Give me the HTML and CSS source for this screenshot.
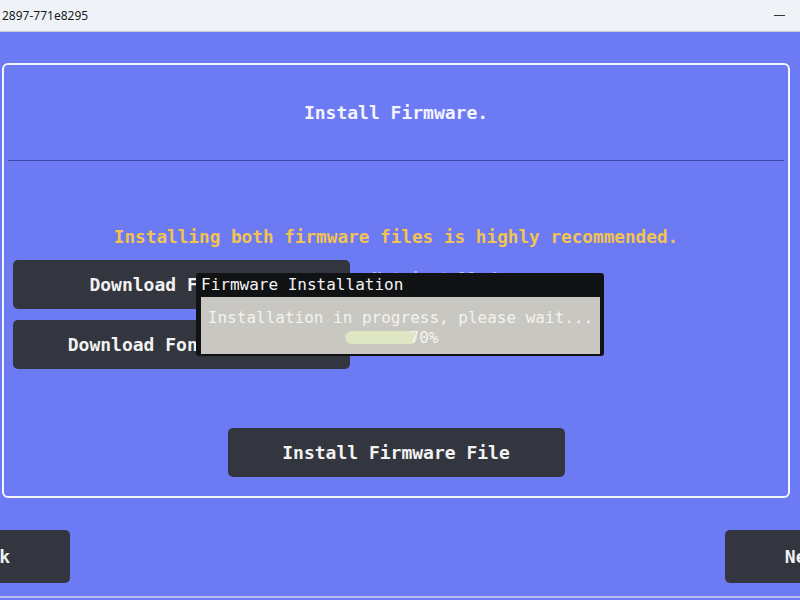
FILE: index.html
```html
<!DOCTYPE html>
<html>
<head>
<meta charset="utf-8">
<link rel="stylesheet" href="styles.css">
</head>
<body>
<div class="titlebar">
  <span class="wintitle">2897-771e8295</span>
  <span class="minimize"></span>
</div>
<div class="main">
  <div class="panel">
    <div class="heading">Install Firmware.</div>
    <div class="divider"></div>
    <div class="notice">Installing both firmware files is highly recommended.</div>
    <div class="dl-row">
      <button class="btn dl">Download Firmware</button>
      <span class="status">Not installed</span>
    </div>
    <div class="dl-row second">
      <button class="btn dl">Download Font Library</button>
      <span class="status">Not installed</span>
    </div>
    <div class="install-row">
      <button class="btn install">Install Firmware File</button>
    </div>
  </div>
  <div class="nav-row">
    <button class="btn nav back">Back</button>
    <button class="btn nav next">Next</button>
  </div>
  <div class="dialog">
    <div class="dialog-title">Firmware Installation</div>
    <div class="dialog-body">
      <div class="dialog-msg">Installation in progress, please wait...</div>
      <div class="progress">
        <div class="track"><div class="fill" style="width:70%"></div></div>
        <span class="pct">70%</span>
      </div>
    </div>
  </div>
</div>
</body>
</html>
```
FILE: styles.css
```css
html, body {
  margin: 0;
  padding: 0;
  width: 800px;
  height: 600px;
  overflow: hidden;
  background: #6c7af3;
}
.titlebar {
  height: 31px;
  background: #eff3f8;
  border-bottom: 1px solid #c9ceda;
  display: flex;
  align-items: center;
  justify-content: space-between;
  padding: 0 15px 0 2px;
  font-family: "Noto Sans", "Open Sans", sans-serif;
  font-size: 12px;
  color: #1a1a1a;
}
.minimize {
  width: 11px;
  height: 1px;
  background: #333;
}
.main {
  position: relative;
  height: 566px;
  padding: 31px 0 0 2px;
  box-sizing: border-box;
  border-bottom: 2px solid #b8bdf0;
  font-family: "DejaVu Sans Mono", "Liberation Mono", monospace;
}
.panel {
  width: 788px;
  height: 435px;
  box-sizing: border-box;
  border: 2px solid #f4f5ff;
  border-radius: 6px;
  display: flex;
  flex-direction: column;
}
.heading {
  height: 95px;
  display: flex;
  align-items: center;
  justify-content: center;
  color: #f3f4ff;
  font-weight: bold;
  font-size: 18px;
}
.divider {
  height: 1px;
  margin: 0 4px;
  background: #3d47a6;
}
.notice {
  margin-top: 65px;
  line-height: 22px;
  text-align: center;
  color: #f2c351;
  font-weight: bold;
  font-size: 17.7px;
}
.btn {
  border: none;
  background: #33363e;
  color: #f2f2f2;
  font-family: "DejaVu Sans Mono", "Liberation Mono", monospace;
  font-weight: bold;
  font-size: 18px;
  border-radius: 5px;
  height: 49px;
  padding: 0;
}
.dl-row {
  display: flex;
  align-items: flex-start;
  margin: 12px 0 0 9px;
}
.dl-row.second {
  margin-top: 11px;
}
.dl {
  width: 337px;
}
.status {
  margin: 9px 0 0 22px;
  font-size: 16px;
  font-weight: bold;
  color: #b9c0f6;
}
.install-row {
  display: flex;
  justify-content: center;
  margin-top: 59px;
}
.install {
  width: 337px;
}
.nav-row {
  display: flex;
  justify-content: space-between;
  margin: 32px -88px 0 -95px;
}
.nav {
  width: 163px;
  height: 53px;
}
.dialog {
  position: absolute;
  left: 196px;
  top: 241px;
  width: 408px;
  height: 83px;
  background: #111214;
  border-radius: 3px;
  box-sizing: border-box;
  padding: 0 4px 2px 5px;
  display: flex;
  flex-direction: column;
}
.dialog-title {
  height: 24px;
  line-height: 23px;
  color: #f4f4f4;
  font-size: 16px;
}
.dialog-body {
  flex: 1;
  background: #c9c7c1;
  display: flex;
  flex-direction: column;
  align-items: center;
}
.dialog-msg {
  margin-top: 11px;
  color: #f3f3ef;
  font-size: 16px;
  line-height: 20px;
}
.progress {
  position: relative;
  width: 248px;
  height: 16px;
}
.track {
  position: absolute;
  left: 68px;
  top: 3px;
  width: 103px;
  height: 13px;
}
.fill {
  height: 100%;
  background: #dfe6c3;
  border-radius: 7px;
}
.pct {
  position: absolute;
  left: 133px;
  top: 0;
  color: #f3f3ef;
  font-size: 16px;
}
```
